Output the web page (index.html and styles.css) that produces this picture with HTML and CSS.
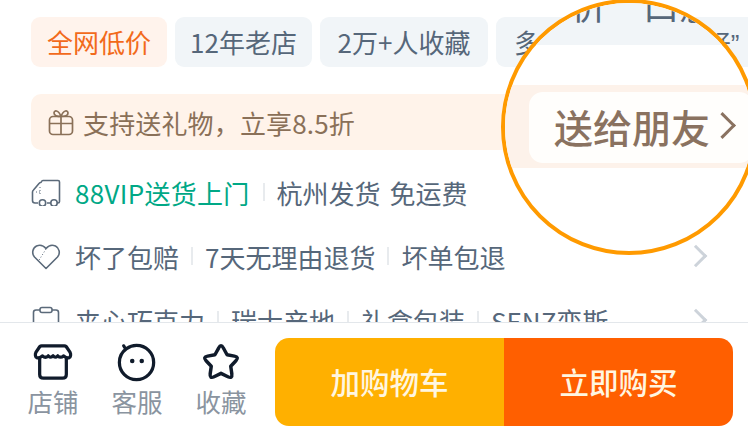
FILE: index.html
```html
<!DOCTYPE html>
<html lang="zh-CN">
<head>
    <meta charset="UTF-8" />
    <title>商品详情</title>
    <link rel="stylesheet" href="styles.css">
</head>
<body>
    <div class="page">
        <div class="content">
            <div class="tags">
                <span class="tag tagHot">全网低价</span>
                <span class="tag tagShop">12年老店</span>
                <span class="tag tagFav">2万+人收藏</span>
                <span class="tag tagLong">多人评价<span class="quote">“</span>口感很好<span class="quote">”</span></span>
            </div>
            <div class="gift">
                <svg class="giftIcon" viewBox="0 0 26 28" fill="none" stroke="#8a7058" stroke-width="1.700">
                    <rect x="1.500" y="8.500" width="23" height="18" rx="3.500"/>
                    <path d="M1.500 15.500H24.500M13 8.500V26.500M13 8.500C9 8.500 6 7.500 6 5C6 2 10.500 1.500 13 8.500C15.500 1.500 20 2 20 5C20 7.500 17 8.500 13 8.500Z"/>
                </svg>
                <span class="giftText">支持送礼物&#65292;立享8.5折</span>
            </div>
            <div class="row">
                <svg class="rowIcon" viewBox="0 0 30 28" fill="none" stroke="#5b6a7a" stroke-width="1.600" stroke-linejoin="round">
                    <path d="M7 25H4C2.500 25 1.500 24 1.500 22.500V14C1.500 13 2 12.500 2.500 12L8 5.500C8.500 5 9 4.500 9.500 4.500H10L10.500 3.500C10.700 3 11 2.500 12 2.500H27C28 2.500 28.500 3 28.500 4V23.500C28.500 24.500 28 25 27 25H26M16 25H20"/>
                    <circle cx="11.500" cy="25" r="3.200"/>
                    <circle cx="23" cy="25" r="3.200"/>
                    <path d="M5 14H9M9 9V18" stroke-width="1" stroke-dasharray="1 2"/>
                </svg>
                <span class="green">88VIP送货上门</span>
                <i class="sep"></i>
                <span class="wide">杭州发货 免运费</span>
            </div>
            <div class="row">
                <svg class="rowIcon" viewBox="0 0 30 28" fill="none" stroke="#5b6a7a" stroke-width="1.600" stroke-linejoin="round">
                    <path d="M15 26.500L3.500 15C0.500 11.500 1.500 6 5.500 4C9 2.500 12.500 3.500 15 6.500C17.500 3.500 21 2.500 24.500 4C28.500 6 29.500 11.500 26.500 15Z"/>
                    <path d="M15 7L7.500 19" stroke-width="1" stroke-dasharray="1 2"/>
                </svg>
                <span>坏了包赔</span>
                <i class="sep"></i>
                <span>7天无理由退货</span>
                <i class="sep"></i>
                <span>坏单包退</span>
                <i class="chevron"></i>
            </div>
            <div class="row">
                <svg class="rowIcon" viewBox="0 0 30 28" fill="none" stroke="#5b6a7a" stroke-width="1.600" stroke-linejoin="round">
                    <path d="M9 4H5C3.500 4 2.500 5 2.500 6.500V26H27.500V6.500C27.500 5 26.500 4 25 4H21"/>
                    <rect x="9" y="1.500" width="12" height="5" rx="2"/>
                </svg>
                <span>夹心巧克力</span>
                <i class="sep"></i>
                <span>瑞士产地</span>
                <i class="sep"></i>
                <span>礼盒包装</span>
                <i class="sep"></i>
                <span>SENZ变斯</span>
                <i class="chevron"></i>
            </div>
        </div>
        <div class="bar">
            <div class="barItem">
                <svg class="barIcon" viewBox="-1 -1 42 42" fill="none" stroke="#101b2b" stroke-width="3.400" stroke-linejoin="round" stroke-linecap="round">
                    <path d="M8 3H32C33 3 33.500 3.500 34 4L38 10C39 12 38.500 15 37 15.500C34.500 16.500 33 15 31 13.500C29 15.500 27 15.500 25 13.500C23 15.500 21.500 15.500 20 13.500C18.500 15.500 17 15.500 15 13.500C13 15.500 11 15.500 9 13.500C7 15 5.500 16.500 3 15.500C1.500 15 1 12 2 10L6 4C6.500 3.500 7 3 8 3Z"/>
                    <path d="M6 16V33C6 35.500 7.500 37 10 37H30C32.500 37 34 35.500 34 33V16"/>
                </svg>
                <span>店铺</span>
            </div>
            <div class="barItem">
                <svg class="barIcon" viewBox="-1 -1 42 42" fill="none" stroke="#101b2b" stroke-width="3.400" stroke-linecap="round">
                    <path d="M9 6C3.500 10 1.500 15 1.500 20.500C1.500 30.500 9.500 38.500 19.500 38.500C29.500 38.500 37.500 30.500 37.500 20.500C37.500 10.500 29.500 2.500 19.500 2.500C15.500 2.500 12 3.700 9 6C7.500 5.500 6.500 4.500 6 3"/>
                    <circle cx="15" cy="19" r="2.400" fill="#101b2b" stroke="none"/>
                    <circle cx="25" cy="19" r="2.400" fill="#101b2b" stroke="none"/>
                </svg>
                <span>客服</span>
            </div>
            <div class="barItem">
                <svg class="barIcon" viewBox="1.500 0.500 37 37" fill="none" stroke="#101b2b" stroke-width="3.200" stroke-linejoin="round">
                    <path d="M17.800 6.100Q20 2 22.200 6.100L25.600 12.300L32.400 13.600Q37 14.400 33.800 17.800L29 22.900L30 29.900Q30.600 34.600 26.400 32.600L20 29.500L13.600 32.600Q9.400 34.600 10 29.900L11 22.900L6.200 17.800Q3 14.400 7.600 13.600L14.400 12.300Z"/>
                </svg>
                <span>收藏</span>
            </div>
            <div class="buyBtns">
                <div class="btnCart">加购物车</div>
                <div class="btnBuy">立即购买</div>
            </div>
        </div>
        <div class="lens">
            <div class="lensTag"><span>评价“口感</span></div>
            <div class="lensGift">
                <div class="lensBtn">送给朋友<i class="lensChevron"></i></div>
            </div>
        </div>
    </div>
</body>
</html>
```

FILE: styles.css
```css
body {
    margin: 0;
    font-family: "Noto Sans CJK SC", "Noto Sans", sans-serif;
    background: #fff;
    color: #56677a;
}
.page {
    position: relative;
    width: 748px;
    height: 442px;
    overflow: hidden;
    display: flex;
    flex-direction: column;
}
.content {
    height: 322px;
    padding: 17px 0 0 31px;
    box-sizing: border-box;
    overflow: hidden;
    font-size: 26px;
}
.tags {
    display: flex;
    gap: 8px;
    white-space: nowrap;
}
.tag {
    flex: none;
    width: 136px;
    height: 50px;
    line-height: 50px;
    text-align: center;
    background: #f1f5f8;
    border-radius: 9px;
}
.tagHot {
    background: #fff3ec;
    color: #f26a1b;
}
.tagShop {
    width: 137px;
}
.tagFav {
    width: 168px;
}
.tagLong {
    width: 300px;
    padding-left: 18px;
    text-align: left;
}
.quote {
    font-family: "Liberation Sans", sans-serif;
}
.gift {
    display: flex;
    align-items: center;
    gap: 9px;
    height: 56px;
    margin-top: 27px;
    padding-left: 17px;
    background: #fff3ea;
    border-radius: 10px;
    color: #8a7058;
}
.giftIcon {
    width: 26px;
    height: 28px;
}
.giftText {
    letter-spacing: 0.15px;
}
.gift + .row {
    margin-top: 10px;
}
.row {
    display: flex;
    align-items: center;
    height: 64px;
    white-space: nowrap;
}
.rowIcon {
    width: 30px;
    height: 28px;
    margin-right: 14px;
    flex: none;
}
.green {
    color: #00a886;
    letter-spacing: 0.3px;
    margin-right: 1px;
}
.wide {
    word-spacing: 3px;
}
.sep {
    width: 2px;
    height: 18px;
    margin: 0 12px;
    background: #e8ebee;
}
.chevron {
    width: 16px;
    height: 16px;
    margin-left: auto;
    margin-right: 44px;
    box-sizing: border-box;
    border-top: 3px solid #cdd3da;
    border-right: 3px solid #cdd3da;
    transform: rotate(45deg);
}
.bar {
    display: flex;
    height: 120px;
    box-sizing: border-box;
    padding: 15px 15px 0 11px;
    border-top: 1px solid #e3e7eb;
    background: #fff;
}
.barItem {
    width: 84px;
    display: flex;
    flex-direction: column;
    align-items: center;
    font-size: 25.500px;
    color: #8a94a0;
}
.barIcon {
    width: 40px;
    height: 40px;
    margin-top: 4px;
}
.barItem span {
    line-height: 36px;
    margin-top: 1px;
}
.buyBtns {
    display: flex;
    flex: 1;
    height: 88px;
    margin-left: 12px;
    border-radius: 14px;
    overflow: hidden;
    font-size: 29.500px;
    font-weight: 500;
    line-height: 86px;
    text-align: center;
    color: #fff6e0;
}
.btnCart {
    width: 229px;
    background: #ffb000;
}
.btnBuy {
    flex: 1;
    background: #ff5f00;
}
.lens {
    position: absolute;
    left: 501px;
    top: -1px;
    width: 256px;
    height: 256px;
    box-sizing: border-box;
    border: 4px solid #ff9a00;
    border-radius: 50%;
    overflow: hidden;
    background: #fff;
}
.lensTag {
    height: 42px;
    overflow: hidden;
    background: #f1f5f8;
    font-size: 36px;
    color: #56677a;
    white-space: nowrap;
}
.lensTag span {
    display: block;
    margin: -24px 0 0 30px;
    line-height: 50px;
}
.lensGift {
    height: 83px;
    margin-top: 40px;
    padding: 7px 0 5px 24px;
    box-sizing: border-box;
    background: #fdf2ea;
}
.lensBtn {
    display: flex;
    align-items: center;
    height: 71px;
    box-sizing: border-box;
    padding: 0 0 4px 25px;
    background: #fffefc;
    border-radius: 14px;
    font-size: 39px;
    font-weight: 500;
    color: #8a7260;
}
.lensChevron {
    width: 19px;
    height: 19px;
    margin-left: 3px;
    box-sizing: border-box;
    border-top: 3px solid #8a7260;
    border-right: 3px solid #8a7260;
    transform: rotate(45deg);
}
```
